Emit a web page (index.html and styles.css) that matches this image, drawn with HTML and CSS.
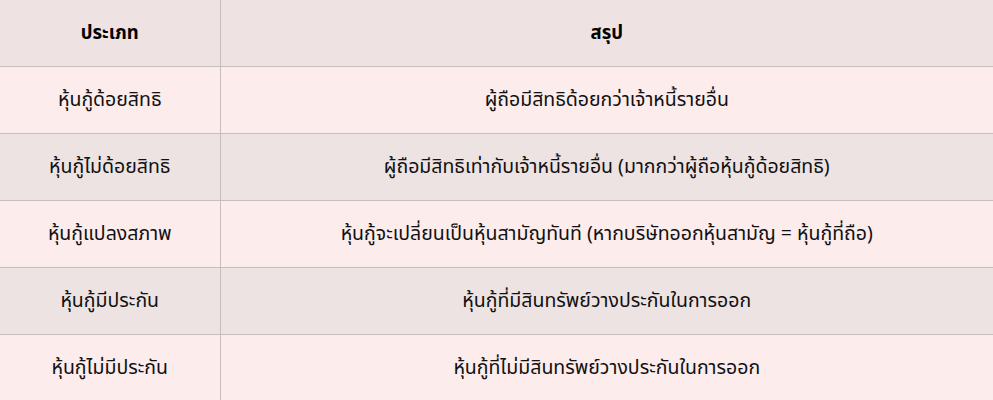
FILE: index.html
```
<!DOCTYPE html>
<html lang="th">
<head>
<meta charset="utf-8">
<link rel="stylesheet" href="styles.css">
</head>
<body>
<table class="summary">
  <thead>
    <tr><th class="c1">ประเภท</th><th class="c2">สรุป</th></tr>
  </thead>
  <tbody>
    <tr class="odd"><td>หุ้นกู้ด้อยสิทธิ</td><td>ผู้ถือมีสิทธิด้อยกว่าเจ้าหนี้รายอื่น</td></tr>
    <tr class="even"><td>หุ้นกู้ไม่ด้อยสิทธิ</td><td>ผู้ถือมีสิทธิเท่ากับเจ้าหนี้รายอื่น (มากกว่าผู้ถือหุ้นกู้ด้อยสิทธิ)</td></tr>
    <tr class="odd"><td>หุ้นกู้แปลงสภาพ</td><td>หุ้นกู้จะเปลี่ยนเป็นหุ้นสามัญทันที (หากบริษัทออกหุ้นสามัญ = หุ้นกู้ที่ถือ)</td></tr>
    <tr class="even"><td>หุ้นกู้มีประกัน</td><td>หุ้นกู้ที่มีสินทรัพย์วางประกันในการออก</td></tr>
    <tr class="odd"><td>หุ้นกู้ไม่มีประกัน</td><td>หุ้นกู้ที่ไม่มีสินทรัพย์วางประกันในการออก</td></tr>
  </tbody>
</table>
</body>
</html>
```
FILE: styles.css
```
html, body {
  margin: 0;
  padding: 0;
  background: #fcecec;
}
body {
  font-family: "Noto Sans", "Noto Sans Thai", sans-serif;
  color: #111;
}
.summary {
  width: 993px;
  border-collapse: collapse;
  table-layout: fixed;
}
.summary th,
.summary td {
  height: 67px;
  padding: 0 10px;
  text-align: center;
  vertical-align: middle;
  font-size: 19.5px;
  border-bottom: 1px solid #c9bcbc;
  box-sizing: border-box;
}
.summary th:first-child,
.summary td:first-child {
  border-right: 1px solid #c9bcbc;
}
.summary .c1 { width: 220px; }
.summary th {
  height: 66px;
  background: #eee2e2;
  font-size: 18.5px;
  font-weight: 700;
  color: #000;
}
.summary tr.odd td { background: #fcecec; }
.summary tr.even td { background: #eee3e3; }
```
